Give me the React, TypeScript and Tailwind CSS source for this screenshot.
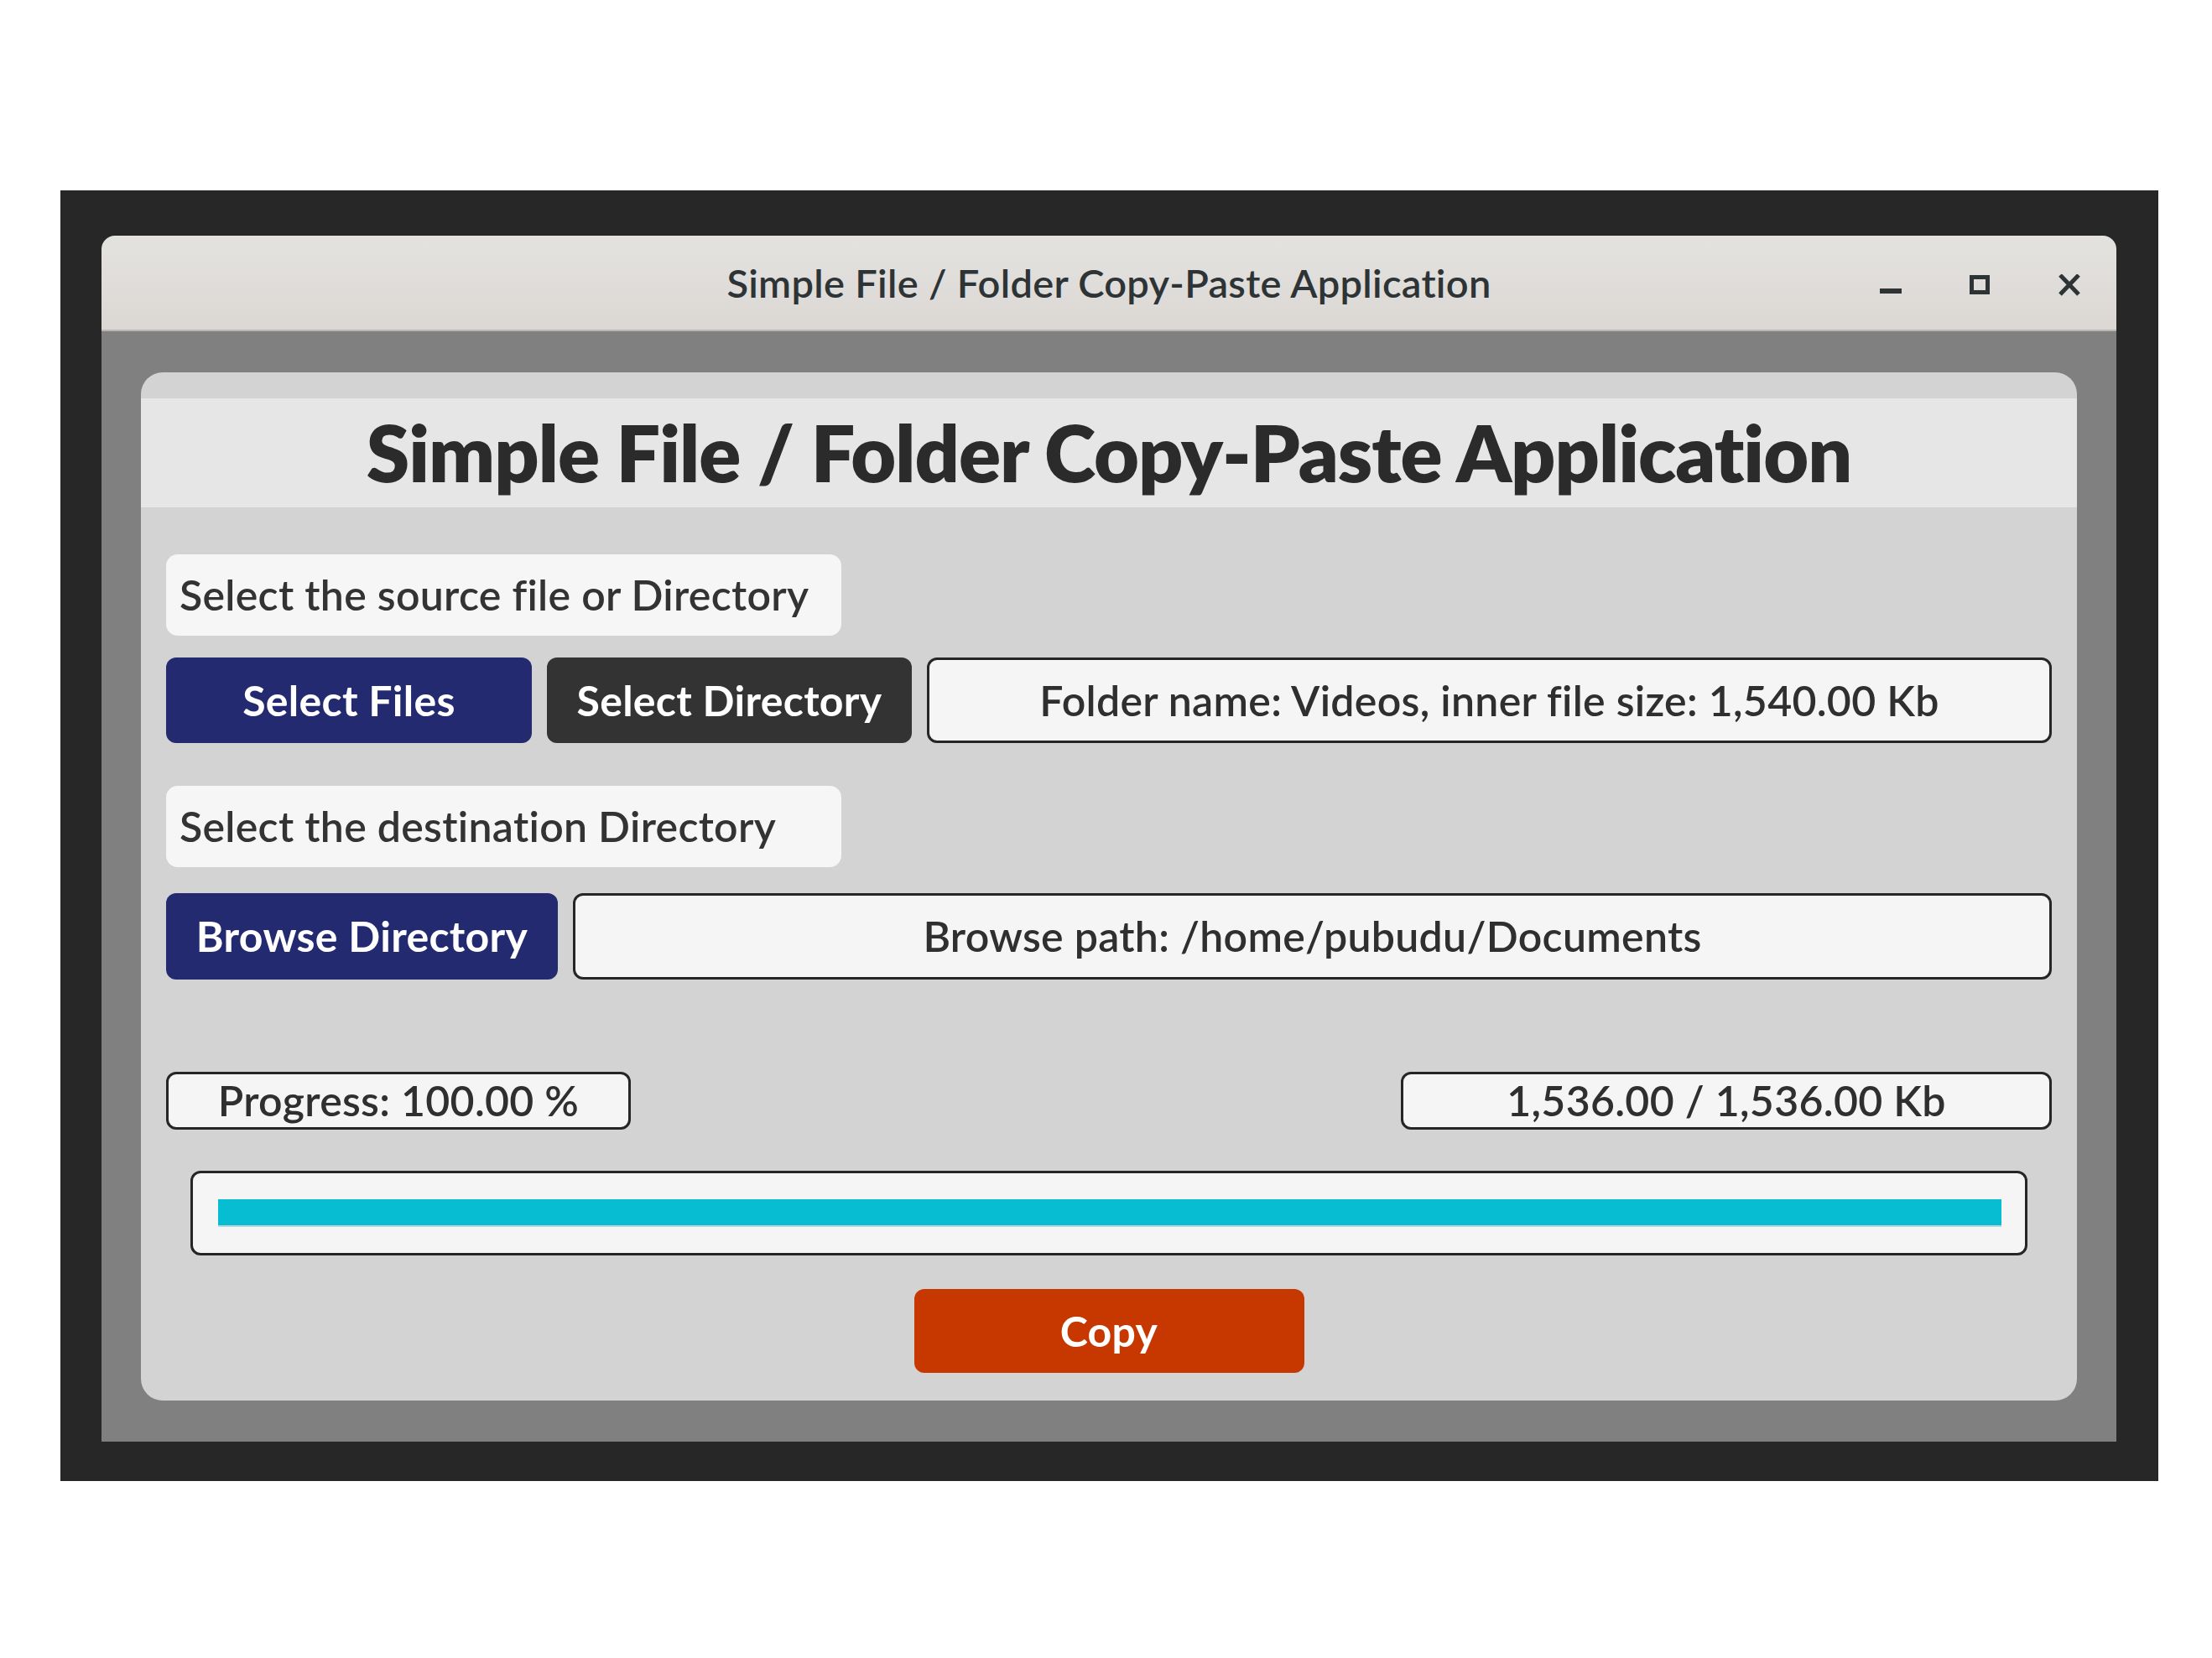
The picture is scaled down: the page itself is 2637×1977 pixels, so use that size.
import React from "react";

const font = "font-['Lato','Liberation_Sans',sans-serif]";

const InfoBox = ({ children, className = "" }: { children: React.ReactNode; className?: string }) => (
    <div
        className={`flex items-center justify-center rounded-[12px] border-[3px] border-[#262626] bg-[#f5f5f5] text-[#2f2f2f] font-semibold tracking-[0.3px] ${className}`}
    >
        {children}
    </div>
);

const Label = ({ children }: { children: React.ReactNode }) => (
    <div className="flex h-[97px] w-[805px] items-center rounded-[14px] bg-[#f6f6f6] pl-[16px] text-[50px] font-semibold tracking-[0.3px] text-[#333333]">
        {children}
    </div>
);

export default function App() {
    return (
        <div className={`min-h-screen bg-white pl-[72px] pt-[227px] ${font}`}>
            {/* outer dark frame */}
            <div className="flex h-[1539px] w-[2501px] flex-col bg-[#272727] pl-[49px] pt-[54px]">
                {/* window */}
                <div className="flex h-[1438px] w-[2402px] flex-col">
                    {/* title bar */}
                    <div className="grid h-[114px] grid-cols-[1fr_auto_1fr] items-center rounded-t-[16px] border-b-2 border-[#b9b5b0] bg-gradient-to-b from-[#e4e2df] to-[#dbd8d4]">
                        <div />
                        <div className="text-[47px] font-semibold tracking-[0.3px] text-[#2e3436]">
                            Simple File / Folder Copy-Paste Application
                        </div>
                        <div className="flex items-center justify-end gap-[80px] pr-[42px] pt-[6px]">
                            <svg width="26" height="26" viewBox="0 0 26 26">
                                <rect x="0" y="17" width="26" height="6" fill="#2e3436" />
                            </svg>
                            <svg width="26" height="26" viewBox="0 0 26 26">
                                <rect x="3.5" y="3.5" width="19" height="18" fill="none" stroke="#2e3436" strokeWidth="5" />
                            </svg>
                            <svg width="28" height="26" viewBox="0 0 28 26">
                                <path d="M3 1 L25 24 M25 1 L3 24" stroke="#2e3436" strokeWidth="5" />
                            </svg>
                        </div>
                    </div>

                    {/* window body */}
                    <div className="flex flex-1 flex-col bg-[#808080] px-[47px] pt-[49px] pb-[49px]">
                        <div className="flex flex-1 flex-col rounded-[26px] bg-[#d3d3d3] pt-[31px]">
                            {/* heading */}
                            <div className="flex h-[130px] items-center justify-center bg-[#e6e6e6]">
                                <h1 className="text-[93px] font-extrabold tracking-[-1px] text-[#2b2b2b]">
                                    Simple File / Folder Copy-Paste Application
                                </h1>
                            </div>

                            <div className="flex flex-col px-[30px]">
                                <div className="mt-[56px]">
                                    <Label>Select the source file or Directory</Label>
                                </div>

                                <div className="mt-[26px] flex h-[102px] gap-[18px]">
                                    <button className="w-[436px] rounded-[12px] bg-[#232a6f] text-[50px] font-bold tracking-[0.3px] text-white">
                                        Select Files
                                    </button>
                                    <button className="w-[435px] rounded-[12px] bg-[#333333] text-[50px] font-bold tracking-[0.3px] text-white">
                                        Select Directory
                                    </button>
                                    <InfoBox className="flex-1 text-[50px]">
                                        Folder name: Videos, inner file size: 1,540.00 Kb
                                    </InfoBox>
                                </div>

                                <div className="mt-[51px]">
                                    <Label>Select the destination Directory</Label>
                                </div>

                                <div className="mt-[31px] flex h-[103px] gap-[18px]">
                                    <button className="w-[467px] rounded-[12px] bg-[#232a6f] text-[50px] font-bold tracking-[0.3px] text-white">
                                        Browse Directory
                                    </button>
                                    <InfoBox className="flex-1 text-[50px]">
                                        Browse path: /home/pubudu/Documents
                                    </InfoBox>
                                </div>

                                <div className="mt-[110px] flex h-[69px] justify-between">
                                    <InfoBox className="w-[554px] text-[50px]">Progress: 100.00 %</InfoBox>
                                    <InfoBox className="w-[776px] text-[50px]">1,536.00 / 1,536.00 Kb</InfoBox>
                                </div>

                                <div className="mx-[29px] mt-[49px] flex h-[101px] items-center rounded-[12px] border-[3px] border-[#262626] bg-[#f5f5f5] pl-[30px] pr-[28px]">
                                    <div className="h-[33px] w-full border-b-2 border-[#bcd5d9] bg-[#06bdd1]" />
                                </div>

                                <div className="mt-[40px] flex justify-center">
                                    <button className="h-[100px] w-[465px] rounded-[12px] bg-[#c73700] text-[50px] font-bold tracking-[0.3px] text-white">
                                        Copy
                                    </button>
                                </div>
                            </div>
                        </div>
                    </div>
                </div>
            </div>
        </div>
    );
}
